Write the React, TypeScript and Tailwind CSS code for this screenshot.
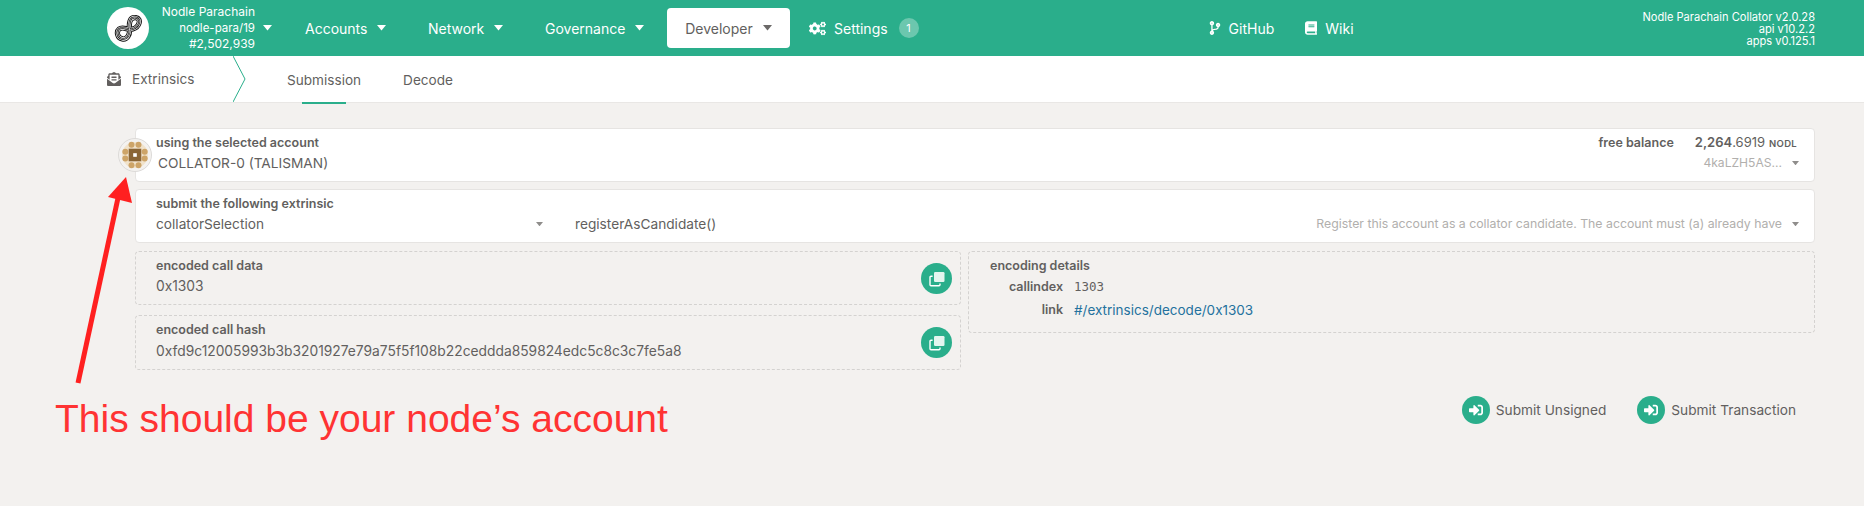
import React from "react";
import { FaBook, FaCodeBranch, FaCogs, FaEnvelopeOpenText, FaSignInAlt } from "react-icons/fa";

function Caret({ className = "", size = 9 }: { className?: string; size?: number }) {
  return (
    <svg width={size} height={size * 0.62} viewBox="0 0 10 6" className={className} fill="currentColor">
      <polygon points="0,0 10,0 5,6" />
    </svg>
  );
}

function NavItem({ label, width }: { label: string; width: string }) {
  return (
    <div className={`flex items-center gap-[10px] ${width} text-[14px] text-white`}>
      <span>{label}</span>
      <Caret className="text-white" />
    </div>
  );
}

function CopyButton() {
  return (
    <div className="absolute right-[8px] top-[11px] flex h-[31px] w-[31px] items-center justify-center rounded-full bg-[#2aae8b]">
      <svg width="16" height="16" viewBox="0 0 16 16" fill="none">
        <rect x="5" y="1" width="10.5" height="10" rx="1.2" fill="#e4f5ef" />
        <path d="M3.6 5.2 H2 a1 1 0 0 0 -1 1 V13.8 a1 1 0 0 0 1 1 H10 a1 1 0 0 0 1 -1 V12.6" stroke="#fff" strokeWidth="1.4" />
      </svg>
    </div>
  );
}

function SubmitButton({ label }: { label: string }) {
  return (
    <div className="flex items-center gap-[6px] text-[13.7px] text-[#625f5e]">
      <div className="flex h-[28px] w-[28px] items-center justify-center rounded-full bg-[#2aae8b]">
        <FaSignInAlt className="h-[14px] w-[14px] text-white" />
      </div>
      <span>{label}</span>
    </div>
  );
}

const eightPath =
  "M3.5 13.5 C7 10.5 12 15 16.5 13.5 C23 11.5 25.5 3.5 19.5 2.5 C13 1.5 13 9 13.5 13.5 C14 19 11 24 6.5 23 C1.5 22 0.5 16 3.5 13.5 Z";

function Logo() {
  return (
    <div className="flex h-[42px] w-[42px] shrink-0 items-center justify-center rounded-full bg-white">
      <svg width="30" height="28" viewBox="-1 -1 26 27" fill="none" strokeLinejoin="round">
        <path d={eightPath} stroke="#111" strokeWidth="5" />
        <path d={eightPath} stroke="#fff" strokeWidth="3.2" />
        <path d={eightPath} stroke="#111" strokeWidth="2" />
        <path d={eightPath} stroke="#fff" strokeWidth="0.6" />
      </svg>
    </div>
  );
}

function Identicon() {
  const dots = [
    [-3.5, -10.3], [3.5, -10.3], [-9.7, -3.3], [9.7, -3.3], [-9.7, 3.5], [9.7, 3.5], [-3.5, 10.3], [3.5, 10.3],
  ];
  return (
    <div className="absolute left-[118px] top-[138px] h-[34px] w-[34px]">
      <svg width="34" height="34" viewBox="-17 -17 34 34">
        <circle r="16.5" fill="#f4f2f0" stroke="#dcdad8" />
        <circle r="13" fill="#f1e3cc" />
        {dots.map(([x, y], i) => (
          <circle key={i} cx={x} cy={y} r="3" fill="#cda468" />
        ))}
        <rect x="-6.3" y="-6.3" width="12.6" height="12.6" fill="#8a6535" />
        <rect x="-1.8" y="-1.8" width="3.6" height="3.6" fill="#fff" />
      </svg>
    </div>
  );
}

export default function App() {
  return (
    <div className="relative h-[506px] w-[1864px] overflow-hidden bg-[#f3f1ef] font-['Inter','Liberation_Sans',sans-serif] text-[#625f5e]">
      <header className="flex h-[56px] items-center bg-[#2aae8b] pl-[107px] text-white">
        <Logo />
        <div className="ml-[11px] w-[95px] shrink-0 text-right text-[12px] leading-[16px]">
          <div className="whitespace-nowrap">Nodle Parachain</div>
          <div className="text-[11.5px]">nodle-para/19</div>
          <div>#2,502,939</div>
        </div>
        <Caret className="ml-[8px] mr-[33px] text-white" />
        <NavItem label="Accounts" width="w-[123px]" />
        <NavItem label="Network" width="w-[117px]" />
        <NavItem label="Governance" width="w-[122px]" />
        <div className="flex h-[40px] w-[123px] items-center justify-center gap-[10px] rounded-[4px] bg-white text-[14px] text-[#625f5e]">
          <span>Developer</span>
          <Caret className="text-[#6b6968]" />
        </div>
        <div className="ml-[19px] flex items-center text-[14px]">
          <FaCogs className="h-[15px] w-[17px]" />
          <span className="ml-[8px]">Settings</span>
          <span className="ml-[11px] flex h-[20px] w-[20px] items-center justify-center rounded-full bg-[#6cc7ae] text-[11px]">1</span>
        </div>
        <div className="ml-[290px] flex items-center text-[14px]">
          <FaCodeBranch className="h-[14px] w-[12px]" />
          <span className="ml-[8px]">GitHub</span>
          <FaBook className="ml-[31px] h-[14px] w-[12px]" />
          <span className="ml-[8px]">Wiki</span>
        </div>
        <div className="ml-auto mr-[49px] mt-[1px] whitespace-nowrap text-right text-[11.1px] leading-[12px]">
          <div>Nodle Parachain Collator v2.0.28</div>
          <div>api v10.2.2</div>
          <div>apps v0.125.1</div>
        </div>
      </header>

      <nav className="flex h-[47px] items-stretch border-b border-[#e9e7e5] bg-white pl-[107px] text-[13.6px]">
        <div className="flex w-[126px] items-center">
          <FaEnvelopeOpenText className="h-[14px] w-[14px]" />
          <span className="ml-[11px]">Extrinsics</span>
        </div>
        <svg width="14" height="46" viewBox="0 0 14 46" className="shrink-0" fill="none" stroke="#2aae8b">
          <polyline points="0,0 12,23 0,46" />
        </svg>
        <div className="relative ml-[40px] flex items-center pt-[2px]">
          <span>Submission</span>
          <div className="absolute bottom-[-2px] left-[15px] h-[2px] w-[44px] bg-[#2aae8b]" />
        </div>
        <div className="ml-[42px] flex items-center pt-[2px]">Decode</div>
      </nav>

      <main className="ml-[135px] w-[1680px] pt-[25px]">
        <section className="relative flex h-[54px] justify-between rounded-[4px] border border-[#e6e4e2] bg-white pl-[20px] pr-[15px]">
          <div>
            <div className="mt-[6px] text-[12.5px] font-semibold leading-[16px]">using the selected account</div>
            <div className="ml-[2px] mt-[2px] text-[13.7px] leading-[20px]">COLLATOR-0 (TALISMAN)</div>
          </div>
          <div className="flex flex-col items-end">
            <div className="mr-[2px] mt-[5px] flex items-baseline text-[13px] leading-[16px]">
              <span className="text-[12.5px] font-semibold">free balance</span>
              <span className="ml-[21px] font-semibold">2,264</span>
              <span>.6919</span>
              <span className="ml-[4px] text-[9.5px] font-semibold tracking-[0.3px]">NODL</span>
            </div>
            <div className="mt-[2px] flex items-center text-[12.1px] leading-[18px] text-[#b1afad]">
              <span>4kaLZH5AS...</span>
              <Caret className="ml-[10px] text-[#8f8d8b]" size={7} />
            </div>
          </div>
        </section>

        <section className="mt-[7px] flex h-[54px] rounded-[4px] border border-[#e6e4e2] bg-white pl-[20px] pr-[15px]">
          <div className="w-[419px] shrink-0">
            <div className="mt-[6px] text-[12.5px] font-semibold leading-[16px]">submit the following extrinsic</div>
            <div className="mt-[2px] flex items-center text-[13.7px] leading-[20px]">
              <span>collatorSelection</span>
              <Caret className="ml-[272px] text-[#8f8d8b]" size={7} />
            </div>
          </div>
          <div className="mt-[24px] flex h-[20px] flex-1 items-center justify-between text-[13.7px] leading-[20px]">
            <span>registerAsCandidate()</span>
            <div className="flex items-center text-[12.3px] text-[#b1afad]">
              <span>Register this account as a collator candidate. The account must (a) already have</span>
              <Caret className="ml-[10px] text-[#8f8d8b]" size={7} />
            </div>
          </div>
        </section>

        <div className="mt-[8px] flex gap-[7px]">
          <div className="flex w-[826px] flex-col gap-[10px]">
            <section className="relative h-[54px] rounded-[4px] border border-dashed border-[#d4d2d0] pl-[20px]">
              <div className="mt-[6px] text-[12.5px] font-semibold leading-[16px]">encoded call data</div>
              <div className="mt-[2px] text-[13.8px] leading-[20px]">0x1303</div>
              <CopyButton />
            </section>
            <section className="relative h-[55px] rounded-[4px] border border-dashed border-[#d4d2d0] pl-[20px]">
              <div className="mt-[6px] text-[12.5px] font-semibold leading-[16px]">encoded call hash</div>
              <div className="mt-[3px] text-[13.8px] leading-[20px]">0xfd9c12005993b3b3201927e79a75f5f108b22ceddda859824edc5c8c3c7fe5a8</div>
              <CopyButton />
            </section>
          </div>
          <section className="h-[82px] flex-1 rounded-[4px] border border-dashed border-[#d4d2d0] pl-[21px]">
            <div className="mt-[6px] text-[12.5px] font-semibold leading-[16px]">encoding details</div>
            <div className="mt-[3px] grid grid-cols-[73px_1fr] gap-x-[11px] gap-y-[3px] text-[13px] leading-[20px]">
              <span className="text-right font-semibold text-[12.5px]">callindex</span>
              <span className="font-['DejaVu_Sans_Mono',monospace] text-[12.5px]">1303</span>
              <span className="text-right font-semibold text-[12.5px]">link</span>
              <span className="text-[13.5px] text-[#24719e]">#/extrinsics/decode/0x1303</span>
            </div>
          </section>
        </div>

        <div className="-mt-[1px] mr-[19px] flex justify-end gap-[31px] pt-[27px]">
          <SubmitButton label="Submit Unsigned" />
          <SubmitButton label="Submit Transaction" />
        </div>
      </main>

      <Identicon />

      <svg width="140" height="240" viewBox="0 0 140 240" className="absolute left-0 top-[160px]" fill="#ff2020">
        <line x1="78" y1="223" x2="118" y2="38" stroke="#ff2020" strokeWidth="5" />
        <polygon points="126,17 108,37 132,43" />
      </svg>

      <div className="absolute left-[55px] top-[396px] whitespace-nowrap font-['Liberation_Sans',sans-serif] text-[39px] leading-[46px] text-[#ff3333]">
        This should be your node’s account
      </div>
    </div>
  );
}
